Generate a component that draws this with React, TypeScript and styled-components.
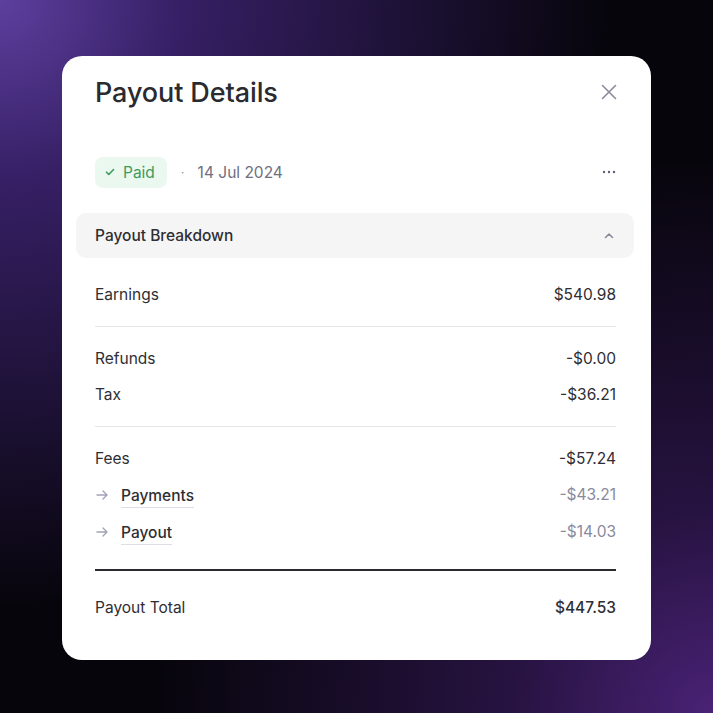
import styled, { createGlobalStyle } from "styled-components";

const GlobalStyle = createGlobalStyle`
    html, body {
        margin: 0;
        padding: 0;
    }

    body {
        font-family: Inter, "Noto Sans", sans-serif;
        -webkit-font-smoothing: antialiased;
    }
`;

const Backdrop = styled.div`
    width: 713px;
    height: 713px;
    display: flex;
    align-items: flex-start;
    justify-content: center;
    padding-top: 56px;
    box-sizing: border-box;
    background:
        radial-gradient(circle at 0% 0%, #5d3f9e 0%, rgba(70, 40, 130, 0.75) 18%, rgba(30, 18, 60, 0) 60%),
        radial-gradient(circle at 100% 100%, #4a2276 0%, rgba(60, 28, 100, 0.6) 20%, rgba(20, 10, 40, 0) 55%),
        #07050c;
`;

const Card = styled.div`
    width: 589px;
    height: 604px;
    background: #ffffff;
    border-radius: 20px;
    padding: 20px 35px 0 33px;
    box-sizing: border-box;
    display: flex;
    flex-direction: column;
    color: #2b2b30;
`;

const Header = styled.div`
    display: flex;
    align-items: center;
    justify-content: space-between;
    height: 32px;
`;

const Title = styled.h1`
    margin: 0;
    font-size: 27px;
    font-weight: 500;
    letter-spacing: -0.1px;
    color: #2a2a2f;
`;

const IconButton = styled.button`
    display: flex;
    align-items: center;
    justify-content: center;
    width: 28px;
    height: 28px;
    margin-right: -7px;
    padding: 0;
    border: none;
    background: none;
    color: #8b8b9c;
`;

const StatusRow = styled.div`
    display: flex;
    align-items: center;
    height: 30px;
    margin-top: 49px;
`;

const Badge = styled.span`
    display: inline-flex;
    align-items: center;
    gap: 8px;
    height: 31px;
    padding: 0 12px 0 10px;
    border-radius: 8px;
    background: #eaf8ef;
    color: #3f9a5e;
    font-size: 15.5px;
`;

const Dot = styled.span`
    margin: 0 13px 0 14px;
    color: #9a9aab;
    font-size: 13px;
`;

const DateText = styled.span`
    color: #6e6e80;
    font-size: 15.5px;
`;

const Spacer = styled.div`
    flex: 1;
`;

const Breakdown = styled.div`
    display: flex;
    align-items: center;
    justify-content: space-between;
    height: 45px;
    margin: 26px -18px 18px -19px;
    padding: 0 18px 0 19px;
    border-radius: 10px;
    background: #f5f5f6;
    font-size: 15.5px;
    font-weight: 500;
    color: #2e2e33;
`;

const Row = styled.div<{ $height?: number }>`
    display: flex;
    align-items: center;
    justify-content: space-between;
    height: ${props => props.$height ?? 36}px;
    font-size: 15.5px;
`;

const Label = styled.span`
    display: flex;
    align-items: center;
    color: #2e2e33;
`;

const SubLabel = styled.span`
    margin-left: 12px;
    padding-bottom: 2px;
    border-bottom: 1.5px solid #dedee6;
    color: #2e2e33;
    font-weight: 500;
    line-height: 18px;
    transform: translateY(3px);
`;

const Amount = styled.span<{ $muted?: boolean; $strong?: boolean }>`
    color: ${props => (props.$muted ? "#8a8a9e" : "#2e2e33")};
    font-weight: ${props => (props.$strong ? 500 : 400)};
`;

const Divider = styled.hr<{ $thick?: boolean }>`
    margin: ${props => (props.$thick ? "19px 0 18px" : "14px 0 13px")};
    border: none;
    height: ${props => (props.$thick ? 2 : 1)}px;
    background: ${props => (props.$thick ? "#2a2a2f" : "#e6e6eb")};
`;

const CloseIcon = () => (
    <svg width="18" height="18" viewBox="0 0 18 18" fill="none" stroke="currentColor" strokeWidth="1.6" strokeLinecap="round">
        <path d="M2.5 2.5l13 13M15.5 2.5l-13 13" />
    </svg>
);

const CheckIcon = () => (
    <svg width="10" height="10" viewBox="0 0 10 10" fill="none" stroke="currentColor" strokeWidth="1.6" strokeLinecap="round" strokeLinejoin="round">
        <path d="M1.5 5.2l2.3 2.3L8.5 2.5" />
    </svg>
);

const DotsIcon = () => (
    <svg width="14" height="4" viewBox="0 0 14 4" fill="#5f5f72">
        <circle cx="2" cy="2" r="1.2" />
        <circle cx="7" cy="2" r="1.2" />
        <circle cx="12" cy="2" r="1.2" />
    </svg>
);

const ChevronUp = () => (
    <svg width="12" height="8" viewBox="0 0 12 8" fill="none" stroke="#8b8b9c" strokeWidth="1.6" strokeLinecap="round" strokeLinejoin="round">
        <path d="M2.5 5.5L6 2l3.5 3.5" />
    </svg>
);

const ArrowIcon = () => (
    <svg width="14" height="12" viewBox="0 0 14 12" fill="none" stroke="#a3a3b8" strokeWidth="1.4" strokeLinecap="round" strokeLinejoin="round">
        <path d="M2 6h10M8 2l4 4-4 4" />
    </svg>
);

const feeLines = [
    { label: "Payments", amount: "-$43.21" },
    { label: "Payout", amount: "-$14.03" }
];

const App = () => {
    return (
        <>
            <GlobalStyle />
            <Backdrop>
                <Card>
                    <Header>
                        <Title>Payout Details</Title>
                        <IconButton aria-label="Close"><CloseIcon /></IconButton>
                    </Header>

                    <StatusRow>
                        <Badge><CheckIcon />Paid</Badge>
                        <Dot>·</Dot>
                        <DateText>14 Jul 2024</DateText>
                        <Spacer />
                        <IconButton aria-label="More"><DotsIcon /></IconButton>
                    </StatusRow>

                    <Breakdown>
                        Payout Breakdown
                        <IconButton aria-label="Collapse"><ChevronUp /></IconButton>
                    </Breakdown>

                    <Row>
                        <Label>Earnings</Label>
                        <Amount>$540.98</Amount>
                    </Row>

                    <Divider />

                    <Row>
                        <Label>Refunds</Label>
                        <Amount>-$0.00</Amount>
                    </Row>
                    <Row>
                        <Label>Tax</Label>
                        <Amount>-$36.21</Amount>
                    </Row>

                    <Divider />

                    <Row>
                        <Label>Fees</Label>
                        <Amount>-$57.24</Amount>
                    </Row>
                    {feeLines.map(line => (
                        <Row key={line.label} $height={37}>
                            <Label>
                                <ArrowIcon />
                                <SubLabel>{line.label}</SubLabel>
                            </Label>
                            <Amount $muted>{line.amount}</Amount>
                        </Row>
                    ))}

                    <Divider $thick />

                    <Row>
                        <Label>Payout Total</Label>
                        <Amount $strong>$447.53</Amount>
                    </Row>
                </Card>
            </Backdrop>
        </>
    );
};

export default App;
